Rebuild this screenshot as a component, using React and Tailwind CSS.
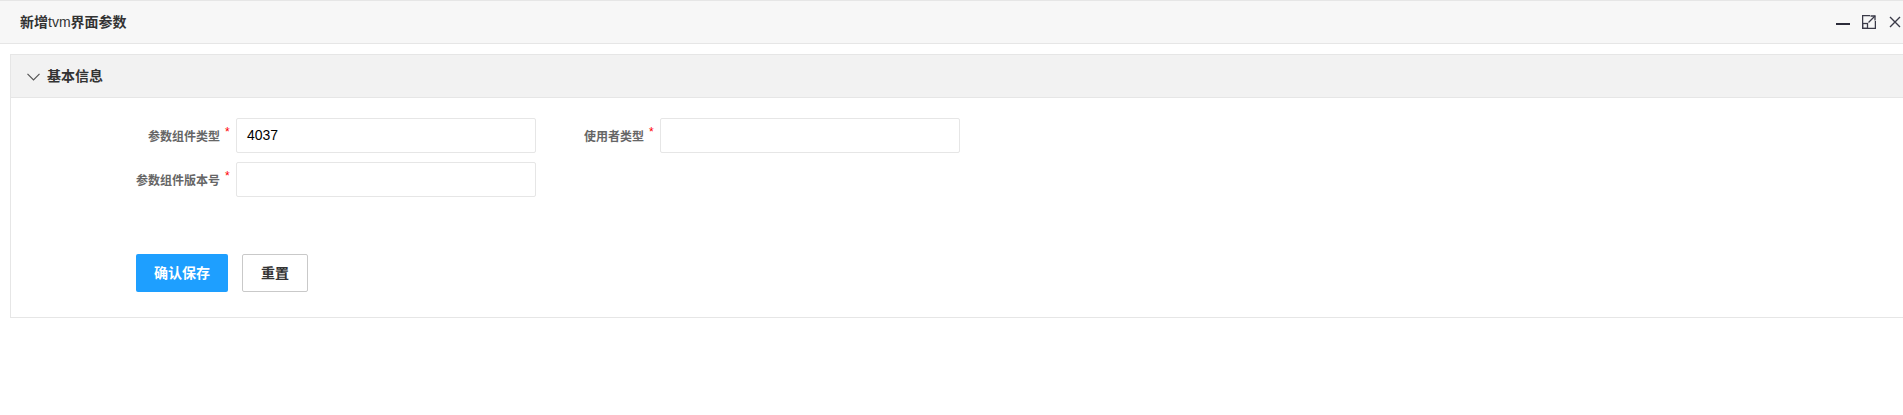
import React from "react";

const font = { fontFamily: '"Liberation Sans", "Noto Sans CJK SC", sans-serif' };

function Field({ label, value }) {
  return (
    <div className="flex items-center">
      <div className="w-[124px] flex justify-end items-center pr-[5px]">
        <span className="text-[12px] font-bold text-[#666] leading-none mt-[3px]">{label}</span>
        <span className="w-[6px] ml-[5px] text-[12px] text-[#ff0000] leading-none mb-[8px]">*</span>
      </div>
      <div className="w-[300px] h-[35px] border border-[#e6e6e6] rounded-[2px] bg-white flex items-center px-[10px] text-[14px] text-[#000]">
        {value}
      </div>
    </div>
  );
}

export default function App() {
  return (
    <div className="w-full h-[415px] bg-white overflow-hidden" style={font}>
      <div className="h-[44px] border-t border-b border-[#e6e6e6] bg-[#f7f7f7] flex items-center pl-[20px] pr-[2px]">
        <span className="text-[14px] font-bold text-[#333]">
          新增<span className="font-normal">tvm</span>界面参数
        </span>
        <div className="ml-auto flex items-center">
          <svg width="14" height="14" viewBox="0 0 14 14">
            <line x1="0" y1="9" x2="14" y2="9" stroke="#2c2c3a" strokeWidth="2" />
          </svg>
          <svg width="14" height="14" viewBox="0 0 14 14" className="ml-[12px]" fill="none" stroke="#3a3a48" strokeWidth="1.3">
            <path d="M8 0.6 H0.6 V13.4 H13.4 V6" />
            <rect x="0.6" y="8.5" width="4.9" height="4.9" />
            <path d="M6.5 7.5 L13 1" />
            <path d="M8.5 1 H13 V5.5" />
          </svg>
          <svg width="12" height="12" viewBox="0 0 12 12" className="ml-[13px]" fill="none" stroke="#3a3a48" strokeWidth="1.4">
            <path d="M1 1 L11 11 M11 1 L1 11" />
          </svg>
        </div>
      </div>
      <div className="pt-[10px] pl-[10px]">
        <div className="w-[1900px] border border-[#e6e6e6]">
          <div className="h-[43px] bg-[#f2f2f2] border-b border-[#e6e6e6] flex items-center pl-[16px]">
            <svg width="13" height="8" viewBox="0 0 13 8" fill="none" stroke="#555" strokeWidth="1.2" className="mt-[1px]">
              <path d="M0.5 0.8 L6.5 6.8 L12.5 0.8" />
            </svg>
            <span className="ml-[7px] text-[14px] font-bold text-[#333]">基本信息</span>
          </div>
          <div className="pt-[20px] pb-[25px] pl-[101px]">
            <div className="flex">
              <Field label="参数组件类型" value="4037" />
              <Field label="使用者类型" value="" />
            </div>
            <div className="flex mt-[9px]">
              <Field label="参数组件版本号" value="" />
            </div>
            <div className="flex mt-[57px] pl-[24px]">
              <button className="w-[92px] h-[38px] bg-[#1e9fff] rounded-[2px] text-white text-[14px] font-bold">确认保存</button>
              <button className="w-[66px] h-[38px] ml-[14px] border border-[#c9c9c9] rounded-[2px] bg-white text-[#333] text-[14px] font-bold">重置</button>
            </div>
          </div>
        </div>
      </div>
    </div>
  );
}
